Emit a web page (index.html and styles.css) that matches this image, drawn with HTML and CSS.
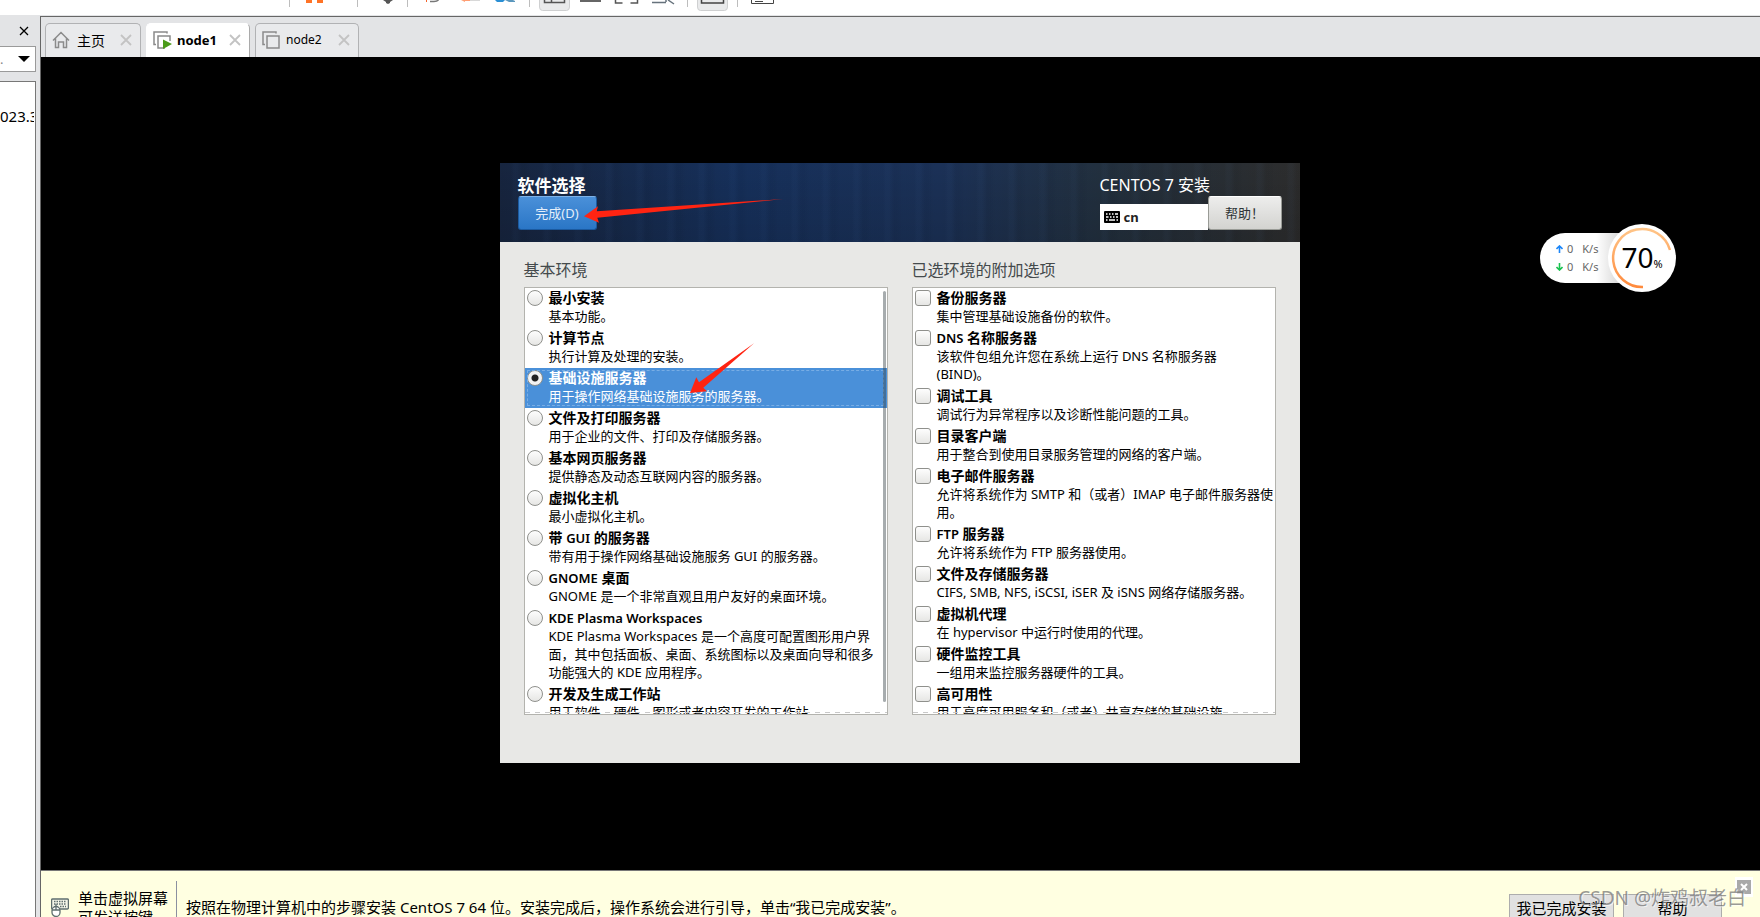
FILE: index.html
```html
<!DOCTYPE html>
<html lang="zh-CN">
<head>
<meta charset="utf-8">
<title>node1</title>
<link rel="stylesheet" href="styles.css">
</head>
<body>
<div class="app">
  <div class="toolbar">
    <svg width="780" height="12" viewBox="0 0 780 12" aria-hidden="true">
      <path d="M289.500 0V7M357.500 0V7M407.500 0V7M529.500 0V7M687.500 0V7M737.500 0V7" stroke="#bdbdbd"/>
      <path d="M306 0h6v3h-6zM317 0h6v3h-6z" fill="#ff7326"/>
      <path d="M383 0h10l-3 2v1l-2 1-2-1v-1z" fill="#555"/>
      <path d="M426 0h1v2h-1z" fill="#f4622a"/>
      <path d="M430 1.500h4q3 0 4.500-1.500" stroke="#777" stroke-width="1.500" fill="none"/>
      <path d="M461 0l4 2v-1h5v-1z" fill="#ff9e73"/><path d="M470 0h10v1h-10z" fill="#d8d8d8"/>
      <path d="M495 0h10l-2 2h-6z" fill="#2b8fd4"/><path d="M505 0h8l2 1v1h-6z" fill="#5b97bd"/>
      <path d="M539.500 0v7q0 3.500 3 3.500h24q3 0 3-3.500V0" fill="#e9eaeb" stroke="#cfd0d1"/>
      <path d="M544.500 0v2.500h20V0M551.500 0v2.500" stroke="#555" fill="none" stroke-width="1.500"/>
      <path d="M580 0h21v2h-21z" fill="#666"/>
      <path d="M615.500 0v3h7M637.500 0v3h-7" stroke="#555" fill="none" stroke-width="1.500"/>
      <path d="M652 2.500h14M666 0v2M668 0l6 4" stroke="#66727c" fill="none" stroke-width="1.500"/>
      <path d="M697.500 0v7q0 3.500 3 3.500h24q3 0 3-3.500V0" fill="#e9eaeb" stroke="#cfd0d1"/>
      <path d="M701.500 0v3h22V0" stroke="#444" fill="none" stroke-width="1.500"/>
      <path d="M751.500 0v3.500h22V0M755 1.500h8" stroke="#444" fill="none"/>
    </svg>
  </div>
  <div class="body">
    <aside class="side">
      <div class="side-head"><button class="side-close" aria-label="关闭"><svg width="10" height="10" viewBox="0 0 10 10"><path d="M1 1l8 8M9 1l-8 8" stroke="#000" stroke-width="1.300"/></svg></button></div>
      <button class="side-combo" aria-label="搜索"><span>.</span><svg width="12" height="6" viewBox="0 0 12 6"><path d="M0 0h12l-6 6z"/></svg></button>
      <div class="side-tree"><span>023.3</span></div>
    </aside>
    <main class="main">
      <nav class="tabs">
        <div class="tab tab-home">
          <svg width="18" height="18" viewBox="0 0 18 18" fill="none" stroke="#8b8b8b" stroke-width="1.500"><path d="M1 9.500l8-8 8 8M3.500 7.500v9h3v-5.500h5v5.500h3v-9"/></svg>
          <span>主页</span>
          <button aria-label="关闭"><svg width="12" height="12" viewBox="0 0 12 12"><path d="M1 1l10 10M11 1l-10 10" stroke="#c3c3c3" stroke-width="1.800"/></svg></button>
        </div>
        <div class="tab tab-on">
          <svg width="19" height="18" viewBox="0 0 19 18" fill="none" stroke="#8b8b8b" stroke-width="1.500"><path d="M3 13.500H1V1h13v1.500M12 17H5V5h12v5"/><path d="M10 8.500l9 4.500-9 5z" fill="#4b9b1a" stroke="none"/></svg>
          <b>node1</b>
          <button aria-label="关闭"><svg width="12" height="12" viewBox="0 0 12 12"><path d="M1 1l10 10M11 1l-10 10" stroke="#c3c3c3" stroke-width="1.800"/></svg></button>
        </div>
        <div class="tab">
          <svg width="19" height="18" viewBox="0 0 19 18" fill="none" stroke="#8b8b8b" stroke-width="1.500"><path d="M3 13.500H1V1h13v1.500M5 5h12v12H5z"/></svg>
          <span>node2</span>
          <button aria-label="关闭"><svg width="12" height="12" viewBox="0 0 12 12"><path d="M1 1l10 10M11 1l-10 10" stroke="#c3c3c3" stroke-width="1.800"/></svg></button>
        </div>
      </nav>
      <section class="screen">
        <div class="installer">
          <header class="banner">
            <div class="banner-left"><h1>软件选择</h1><button class="btn-done">完成(D)</button></div>
            <div class="banner-right">
              <h2>CENTOS 7 安装</h2>
              <div class="kbd-row">
                <div class="kbd"><svg width="16" height="12" viewBox="0 0 16 12"><rect width="16" height="12" rx="1"/><path d="M2 3h1.500M5 3h1.500M8 3h1.500M11 3h3M2 6h2.500M6 6h1.500M9 6h1.500M12 6h2M2 9h1.500M5 9h6M12.500 9h1.500" stroke="#fff" stroke-width="1.500"/></svg><b>cn</b></div>
                <button class="btn-help">帮助！</button>
              </div>
            </div>
          </header>
          <div class="cols">
            <section class="col">
              <h3>基本环境</h3>
              <div class="list">
                <label class="item"><input type="radio" name="env"><span><b>最小安装</b>基本功能。</span></label>
                <label class="item"><input type="radio" name="env"><span><b>计算节点</b>执行计算及处理的安装。</span></label>
                <label class="item item-on"><input type="radio" name="env" checked><span><b>基础设施服务器</b>用于操作网络基础设施服务的服务器。</span></label>
                <label class="item"><input type="radio" name="env"><span><b>文件及打印服务器</b>用于企业的文件、打印及存储服务器。</span></label>
                <label class="item"><input type="radio" name="env"><span><b>基本网页服务器</b>提供静态及动态互联网内容的服务器。</span></label>
                <label class="item"><input type="radio" name="env"><span><b>虚拟化主机</b>最小虚拟化主机。</span></label>
                <label class="item"><input type="radio" name="env"><span><b>带 <span class="latin">GUI</span> 的服务器</b>带有用于操作网络基础设施服务 GUI 的服务器。</span></label>
                <label class="item"><input type="radio" name="env"><span><b><span class="latin">GNOME</span> 桌面</b>GNOME 是一个非常直观且用户友好的桌面环境。</span></label>
                <label class="item"><input type="radio" name="env"><span><b class="latin">KDE Plasma Workspaces</b>KDE Plasma Workspaces 是一个高度可配置图形用户界<br>面，其中包括面板、桌面、系统图标以及桌面向导和很多<br>功能强大的 KDE 应用程序。</span></label>
                <label class="item"><input type="radio" name="env"><span><b>开发及生成工作站</b>用于软件、硬件、图形或者内容开发的工作站。</span></label>
                <div class="scroll"></div>
              </div>
            </section>
            <section class="col">
              <h3>已选环境的附加选项</h3>
              <div class="list">
                <label class="item"><input type="checkbox"><span><b>备份服务器</b>集中管理基础设施备份的软件。</span></label>
                <label class="item"><input type="checkbox"><span><b><span class="latin">DNS</span> 名称服务器</b>该软件包组允许您在系统上运行 DNS 名称服务器<br>(BIND)。</span></label>
                <label class="item"><input type="checkbox"><span><b>调试工具</b>调试行为异常程序以及诊断性能问题的工具。</span></label>
                <label class="item"><input type="checkbox"><span><b>目录客户端</b>用于整合到使用目录服务管理的网络的客户端。</span></label>
                <label class="item"><input type="checkbox"><span><b>电子邮件服务器</b>允许将系统作为 SMTP 和（或者）IMAP 电子邮件服务器使<br>用。</span></label>
                <label class="item"><input type="checkbox"><span><b><span class="latin">FTP</span> 服务器</b>允许将系统作为 FTP 服务器使用。</span></label>
                <label class="item"><input type="checkbox"><span><b>文件及存储服务器</b>CIFS, SMB, NFS, iSCSI, iSER 及 iSNS 网络存储服务器。</span></label>
                <label class="item"><input type="checkbox"><span><b>虚拟机代理</b>在 hypervisor 中运行时使用的代理。</span></label>
                <label class="item"><input type="checkbox"><span><b>硬件监控工具</b>一组用来监控服务器硬件的工具。</span></label>
                <label class="item"><input type="checkbox"><span><b>高可用性</b>用于高度可用服务和（或者）共享存储的基础设施。</span></label>
              </div>
            </section>
          </div>
          <svg class="marks" width="300" height="250" viewBox="0 0 300 250" fill="#ff2412" aria-hidden="true">
            <path d="M84 53.300L98 43.300L96.700 48.300L283.300 36L97.300 54.700L99 59.700Z"/>
            <path d="M190 230L196.300 214.300L199 219.300L254 180.300L203.300 224.700L207 228.300Z"/>
          </svg>
        </div>
        <div class="meter">
          <div class="rates">
            <p><svg width="7" height="8" viewBox="0 0 7 8" fill="none" stroke="#1b86f9" stroke-width="1.600"><path d="M3.500 8V1M.5 4l3-3 3 3"/></svg><span>0</span><span>K/s</span></p>
            <p><svg width="7" height="8" viewBox="0 0 7 8" fill="none" stroke="#19c24f" stroke-width="1.600"><path d="M3.500 0v7M.5 4l3 3 3-3"/></svg><span>0</span><span>K/s</span></p>
          </div>
          <div class="dial">
            <svg width="68" height="68" viewBox="0 0 68 68"><defs><linearGradient id="g" x1="0" y1="0" x2="0" y2="1"><stop offset="0" stop-color="#ffc487"/><stop offset="1" stop-color="#ff8a3c"/></linearGradient></defs><path d="M35 63A29 29 0 1 1 62 26" fill="none" stroke="url(#g)" stroke-width="2.500"/></svg>
            <div class="value">70<small>%</small></div>
          </div>
        </div>
      </section>
      <footer class="hint">
        <svg class="hint-icon" width="18" height="19" viewBox="0 0 18 19" fill="none" stroke="#5f6f6f" stroke-width="1.300"><rect x=".6" y="1" width="16.800" height="10" rx="1" fill="#f4f6e8"/><path d="M3 3.500h12M3 6h12M9 8.500h6" stroke-dasharray="1.500 1"/><rect x="1" y="8.500" width="8" height="10" rx="4" fill="#fff"/><path d="M5 6v6M1 12h8"/></svg>
        <p class="hint-keys">单击虚拟屏幕<br>可发送按键</p>
        <p class="hint-text">按照在物理计算机中的步骤安装 CentOS 7 64 位。安装完成后，操作系统会进行引导，单击“我已完成安装”。</p>
        <div class="hint-btns"><button class="wide">我已完成安装</button><button>帮助</button></div>
        <button class="hint-close" aria-label="关闭"><svg width="14" height="14" viewBox="0 0 14 14"><rect width="14" height="14" fill="#a9a9a9"/><path d="M4 4l6 6M10 4l-6 6" stroke="#fff" stroke-width="2"/></svg></button>
        <span class="watermark">CSDN @炸鸡叔老白</span>
      </footer>
    </main>
  </div>
</div>
</body>
</html>
```

FILE: styles.css
```css
* { box-sizing: border-box; }
body { margin: 0; font-family: "Noto Sans", "Noto Sans CJK SC", sans-serif; font-size: 13px; color: #000; }
h1, h2, h3, p { margin: 0; font-weight: 400; }
button { font: inherit; color: inherit; padding: 0; border: 0; background: none; }
svg { display: block; flex: none; }

.app { height: 100vh; display: flex; flex-direction: column; overflow: hidden; background: #e3e4e6; }
.toolbar { height: 15px; flex: none; background: #fff; }
.body { flex: 1; min-height: 0; display: flex; gap: 4px; }

.side { width: 36px; flex: none; display: flex; flex-direction: column; }
.side-head { height: 31px; display: flex; align-items: center; justify-content: flex-end; padding-right: 7px; }
.side-combo { height: 26px; display: flex; align-items: center; justify-content: space-between; padding-right: 5px; border: 1px solid #9a9a9a; border-left: 0; background: #fff; color: #888; }
.side-tree { flex: 1; margin-top: 9px; padding: 23px 1px 0 0; border: 1px solid #777; border-width: 1px 1px 0 0; background: #fff; font-size: 15px; line-height: 22px; overflow: hidden; }
.side-tree span { display: block; overflow: hidden; }

.main { flex: 1; min-width: 0; margin-top: 1px; display: flex; flex-direction: column; border: solid #666; border-width: 1px 0 0 1px; }
.tabs { height: 40px; flex: none; display: flex; align-items: flex-end; gap: 5px; padding-left: 4px; }
.tab { width: 104px; height: 34px; display: flex; align-items: center; gap: 5px; padding: 0 8px 2px 6px; border: 1px solid #b1b2b4; border-bottom: 0; border-radius: 5px 5px 0 0; background: #e9eaec; font-size: 12px; }
.tab b { font-size: 13px; }
.tab button { margin-left: auto; }
.tab-home { width: 96px; gap: 7px; font-size: 14px; }
.tab-on { background: #fff; border-color: #fff #aaa #fff #fff; }

.screen { flex: 1; min-height: 0; position: relative; display: flex; align-items: center; justify-content: center; padding: 0 2px 2px 0; background: #000; }
.installer { position: relative; width: 800px; height: 600px; background: #e8e8e6; }
.banner { height: 79px; display: flex; justify-content: space-between; padding: 12px 18px 0; color: #fff;
  background:
    repeating-linear-gradient(90deg, rgba(255,255,255,0) 0 11px, rgba(90,140,210,.03) 14px 17px, rgba(0,0,0,.04) 22px 25px, rgba(0,0,0,0) 31px),
    linear-gradient(180deg, rgba(0,0,0,0), rgba(0,0,0,.12)),
    linear-gradient(90deg, #17253f, #16305b 30%, #1b3157 55%, #22303f 75%, #2d2d2d); }
.banner h1 { font-size: 17px; line-height: 21px; font-weight: 700; }
.banner h2 { font-size: 16px; line-height: 21px; }
.btn-done { display: block; width: 79px; height: 34px; border: 1px solid #1b5aa0; border-top-color: #7db2e8; border-radius: 3px; background: linear-gradient(#4a90d9, #2a76c6); color: #e4eefa; }
.kbd-row { display: flex; align-items: flex-end; }
.kbd { width: 108px; height: 26px; display: flex; align-items: center; gap: 4px; padding-left: 4px; background: #fff; color: #222; }
.btn-help { width: 74px; height: 34px; border: 1px solid #999b96; border-top-color: #fff; border-radius: 3px; background: linear-gradient(#ededec, #d3d3d0); color: #2e3436; font-family: "Noto Sans CJK TC", sans-serif; }

.cols { display: flex; gap: 24px; padding: 17px 24px 0; }
.col { flex: 1; min-width: 0; }
.col h3 { font-size: 16px; line-height: 22px; padding-bottom: 6px; color: #444a4c; font-weight: 400; }
.list { position: relative; height: 428px; overflow: hidden; border: 1px solid #b3b3ae; background: #fff; }
.list::after { content: ""; position: absolute; left: 0; right: 0; bottom: 1px; height: 1px; background: repeating-linear-gradient(90deg, #c8c8c8 0 5px, #fff 5px 10px); }
.item { position: relative; display: flex; gap: 6px; padding: 1px 0 3px 2px; line-height: 18px; white-space: nowrap; }
.item b { display: block; font-size: 14px; }
.item .latin { font-size: 13px; font-weight: 600; }
.item input { appearance: none; flex: none; width: 16px; height: 16px; margin: 1px 0 0; border: 1px solid #8f908c; background: linear-gradient(#fdfdfd, #e6e6e4); }
.item input[type="radio"] { border-radius: 50%; }
.item input[type="checkbox"] { border-radius: 3px; }
.item input:checked { background: radial-gradient(circle, #222 0 3px, #f2f2f2 4px); }
.item-on { background: #4a90d9; color: #fff; }
.item-on::after { content: ""; position: absolute; inset: 2px 3px 2px 2px; border: 1px dashed #78ade4; }
.scroll { position: absolute; top: 3px; right: 1px; width: 3px; height: 411px; border-radius: 2px; background: rgba(60,70,75,.45); }
.marks { position: absolute; left: 0; top: 0; pointer-events: none; }

.meter { position: absolute; right: 84px; top: 167px; display: flex; align-items: center; }
.rates { width: 102px; height: 50px; display: flex; flex-direction: column; justify-content: center; padding-left: 16px; margin-right: -34px; border-radius: 25px 0 0 25px; background: linear-gradient(90deg, #fff 55%, #ddd 75%); font-size: 11px; line-height: 18px; color: #666; }
.rates p { display: flex; align-items: center; gap: 4px; }
.rates span + span { margin-left: 5px; }
.dial { position: relative; width: 68px; height: 68px; border-radius: 50%; background: #fff; }
.value { position: absolute; inset: 0; display: flex; align-items: baseline; justify-content: center; font-size: 28px; line-height: 66px; }
.value small { font-size: 11px; }

.hint { position: relative; height: 47px; flex: none; display: flex; align-items: flex-start; padding: 10px 7px 0 10px; background: #ffffe1; border-top: 1px solid #777; font-size: 15px; line-height: 19px; overflow: hidden; white-space: nowrap; }
.hint-icon { margin: 17px 9px 0 0; }
.hint-keys { padding: 8px 8px 0 0; border-right: 1px solid #8b90a0; }
.hint-text { flex: 1; min-width: 0; padding: 17px 0 0 9px; }
.hint-btns { display: flex; gap: 9px; padding-top: 13px; }
.hint-btns button { width: 99px; height: 28px; border: 1px solid #adadad; background: #e1e1e1; }
.hint-btns .wide { width: 105px; }
.hint-close { margin-left: 13px; margin-top: -4px; padding: 3px 2px; background: #fff; }
.watermark { position: absolute; right: 14px; top: 12px; font-size: 19px; line-height: 30px; color: rgba(110,110,110,.7); text-shadow: 1px 1px 0 rgba(255,255,255,.6); }
```
